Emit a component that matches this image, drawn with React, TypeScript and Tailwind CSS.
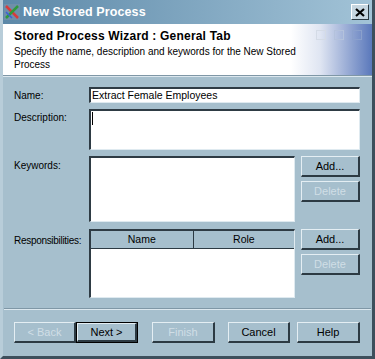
export default function App() {
  const sunken =
    "border-t-[2px] border-l-[2px] border-t-[#2e3b44] border-l-[#2e3b44] border-b border-r border-b-[#dfeaf0] border-r-[#dfeaf0] bg-white";
  const raised =
    "border-t border-l border-t-[#e4eef3] border-l-[#e4eef3] border-b-[2px] border-r-[2px] border-b-[#2c3a43] border-r-[#2c3a43] bg-[#a6bfcd] text-[11px] flex items-center justify-center";

  return (
    <div className="w-[375px] h-[359px] bg-[#a6bfcd] flex flex-col border-r-[3px] border-b-[3px] border-r-[#3d4f5c] border-b-[#3d4f5c] border-l-[3px] border-l-[#b8cdd9] font-['Liberation_Sans',Arial,sans-serif] overflow-hidden">
      {/* title bar */}
      <div className="h-[24px] flex items-center bg-[linear-gradient(to_right,#5c88a8,#a2c3d7)] pl-[1px] pr-[3px]">
        <svg width="16" height="16" viewBox="0 0 16 16" className="shrink-0">
          <rect x="0" y="0" width="16" height="16" fill="#6f8fa9" />
          <path d="M2 2 L14 14" stroke="#d83b3b" strokeWidth="2.5" />
          <path d="M14 2 L2 14" stroke="#2f9a3c" strokeWidth="2.5" />
          <path d="M2 8 L8 14" stroke="#3b5fd8" strokeWidth="1.5" />
        </svg>
        <span className="ml-[3px] text-white font-bold text-[12.5px] tracking-[0.1px]">New Stored Process</span>
        <div className="ml-auto w-[18px] h-[16px] bg-[#c6d6e0] border-t border-l border-t-white border-l-white border-b border-r border-b-[#2c3a43] border-r-[#2c3a43] flex items-center justify-center">
          <svg width="10" height="9" viewBox="0 0 10 9">
            <path d="M1 1 L9 8 M9 1 L1 8" stroke="#000" strokeWidth="2.2" />
          </svg>
        </div>
      </div>

      {/* header */}
      <div className="h-[52px] bg-[linear-gradient(to_right,#ffffff_0%,#ffffff_78%,#dfe5f2_86%,#5a78bb_100%)] px-[11px] pt-[5px] relative border-b border-b-[#7f97a6]">
        <div className="text-[12px] font-bold text-black leading-[15px] tracking-[0.2px]">Stored Process Wizard : General Tab</div>
        <div className="text-[10px] text-black leading-[13px] mt-[1px] w-[300px]">
          Specify the name, description and keywords for the New Stored Process
        </div>
        <div className="absolute top-[6px] right-[10px] flex gap-[8px]">
          <div className="w-[10px] h-[10px] border border-[#d4dbe6]" />
          <div className="w-[10px] h-[10px] border border-[#b4c2dc]" />
          <div className="w-[10px] h-[10px] border border-[#8aa0cc]" />
        </div>
      </div>
      <div className="h-px bg-[#dbe7ee]" />

      {/* form */}
      <div className="flex flex-col pl-[11px] pr-[12px] text-[10px] text-black">
        <div className="flex mt-[10px]">
          <div className="w-[75px] pt-[1px]">Name:</div>
          <div className={`flex-1 h-[16px] ${sunken} px-[1px] leading-[13px] text-[10.5px]`}>Extract Female Employees</div>
        </div>
        <div className="flex mt-[6px]">
          <div className="w-[75px] pt-[1px]">Description:</div>
          <div className={`flex-1 h-[41px] ${sunken}`}>
            <div className="w-px h-[13px] bg-black ml-[1px] mt-[1px]" />
          </div>
        </div>
        <div className="flex mt-[6px]">
          <div className="w-[75px] pt-[2px]">Keywords:</div>
          <div className={`w-[207px] h-[66px] ${sunken}`} />
          <div className="flex flex-col ml-[6px] gap-[4px]">
            <div className={`w-[59px] h-[21px] ${raised} text-black`}>Add...</div>
            <div className={`w-[59px] h-[21px] ${raised} text-[#d0dee6]`}>Delete</div>
          </div>
        </div>
        <div className="flex mt-[7px]">
          <div className="w-[75px] pt-[4px] whitespace-nowrap tracking-[-0.3px]">Responsibilities:</div>
          <div className={`w-[207px] h-[69px] ${sunken} flex flex-col`}>
            <div className="flex h-[18px] bg-[#a6bfcd] text-[10.5px]">
              <div className="w-[103px] border-r border-r-[#2c3a43] border-b border-b-[#2c3a43] flex items-center justify-center">Name</div>
              <div className="flex-1 border-b border-b-[#2c3a43] flex items-center justify-center">Role</div>
            </div>
          </div>
          <div className="flex flex-col ml-[6px] gap-[4px]">
            <div className={`w-[59px] h-[21px] ${raised} text-black`}>Add...</div>
            <div className={`w-[59px] h-[21px] ${raised} text-[#d0dee6]`}>Delete</div>
          </div>
        </div>
      </div>

      {/* separator */}
      <div className="mt-[10px] mx-[1px] h-px bg-[#7f97a6]" />
      <div className="mx-[1px] h-px bg-[#dbe7ee]" />

      {/* buttons */}
      <div className="flex pl-[11px] mt-[12px]">
        <div className={`w-[62px] h-[21px] ${raised} text-[#d0dee6]`}>&lt; Back</div>
        <div className="w-[62px] h-[21px] border border-black flex">
          <div className={`flex-1 ${raised} text-black`}>Next &gt;</div>
        </div>
        <div className={`w-[63px] h-[21px] ml-[14px] ${raised} text-[#d0dee6]`}>Finish</div>
        <div className={`w-[62px] h-[21px] ml-[13px] ${raised} text-black`}>Cancel</div>
        <div className={`w-[63px] h-[21px] ml-[7px] ${raised} text-black`}>Help</div>
      </div>
    </div>
  );
}
